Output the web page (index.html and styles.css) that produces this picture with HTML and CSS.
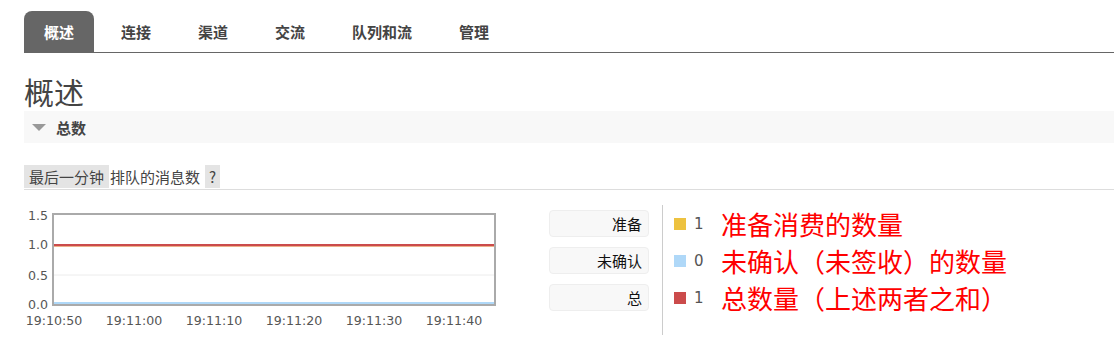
FILE: index.html
```html
<!DOCTYPE html>
<html lang="zh-CN">
<head>
    <meta charset="UTF-8">
    <title>概述</title>
    <link rel="stylesheet" href="styles.css">
</head>
<body>
    <ul class="tabs">
        <li class="tab active">概述</li>
        <li class="tab">连接</li>
        <li class="tab">渠道</li>
        <li class="tab">交流</li>
        <li class="tab">队列和流</li>
        <li class="tab">管理</li>
    </ul>

    <h1>概述</h1>

    <div class="section-head">
        <span class="arrow"></span>
        <span class="section-title">总数</span>
    </div>

    <div class="chart-title">
        <span class="pill">最后一分钟</span>
        <span class="chart-name">排队的消息数</span>
        <span class="pill help">?</span>
    </div>

    <div class="chart-row">
        <svg class="chart" width="500" height="130" viewBox="0 0 500 130">
            <line x1="30" y1="70" x2="470" y2="70" stroke="#ececec" stroke-width="1"/>
            <line x1="30" y1="41" x2="470" y2="41" stroke="#edb08a" stroke-width="2"/>
            <line x1="30" y1="40" x2="470" y2="40" stroke="#cb4b4b" stroke-width="2"/>
            <line x1="30" y1="98.5" x2="470" y2="98.5" stroke="#afd8f8" stroke-width="3"/>
            <rect x="29" y="9" width="442" height="91" fill="none" stroke="#aaa" stroke-width="2"/>
            <g class="y-axis" text-anchor="end">
                <text x="24" y="14.5">1.5</text>
                <text x="24" y="43.5">1.0</text>
                <text x="24" y="74.5">0.5</text>
                <text x="24" y="103.5">0.0</text>
            </g>
            <g class="x-axis" text-anchor="middle">
                <text x="30" y="119.5">19:10:50</text>
                <text x="110" y="119.5">19:11:00</text>
                <text x="190" y="119.5">19:11:10</text>
                <text x="270" y="119.5">19:11:20</text>
                <text x="350" y="119.5">19:11:30</text>
                <text x="430" y="119.5">19:11:40</text>
            </g>
        </svg>

        <div class="legend-labels">
            <div class="legend-row"><span class="label-box">准备</span></div>
            <div class="legend-row"><span class="label-box">未确认</span></div>
            <div class="legend-row"><span class="label-box">总</span></div>
        </div>

        <div class="legend-values">
            <div class="legend-row">
                <span class="swatch ready"></span>
                <span class="count">1</span>
                <span class="note">准备消费的数量</span>
            </div>
            <div class="legend-row">
                <span class="swatch unacked"></span>
                <span class="count">0</span>
                <span class="note">未确认（未签收）的数量</span>
            </div>
            <div class="legend-row">
                <span class="swatch total"></span>
                <span class="count">1</span>
                <span class="note">总数量（上述两者之和）</span>
            </div>
        </div>
    </div>
</body>
</html>
```

FILE: styles.css
```css
body {
    margin: 0;
    padding-left: 24px;
    font-family: "DejaVu Sans", "Noto Sans CJK SC", sans-serif;
    color: #444;
    background-color: #fff;
}

.tabs {
    display: flex;
    list-style: none;
    margin: 11px 0 0;
    padding: 0;
    border-bottom: 1px solid #666;
}

.tab {
    height: 41px;
    line-height: 41px;
    padding: 0 20px;
    margin-right: 7px;
    font-family: "Noto Sans CJK SC", sans-serif;
    font-size: 15px;
    font-weight: bold;
    color: #444;
    border-radius: 8px 8px 0 0;
}

.tab.active {
    background-color: #666;
    color: #fff;
}

h1 {
    margin: 18px 0 0;
    font-family: "Noto Sans CJK SC", sans-serif;
    font-size: 30px;
    font-weight: normal;
    line-height: 40px;
    color: #444;
}

.section-head {
    display: flex;
    align-items: center;
    height: 32px;
    background-color: #f8f8f8;
}

.arrow {
    width: 0;
    height: 0;
    margin: 1px 10px 0 8px;
    border-left: 7px solid transparent;
    border-right: 7px solid transparent;
    border-top: 7px solid #999;
}

.section-title {
    font-family: "Noto Sans CJK SC", sans-serif;
    font-size: 15px;
    font-weight: bold;
    color: #444;
}

.chart-title {
    display: flex;
    align-items: stretch;
    margin-top: 22px;
    height: 24px;
    border-bottom: 1px solid #ddd;
    font-family: "Noto Sans CJK SC", sans-serif;
    font-size: 15px;
    line-height: 23px;
    color: #444;
}

.pill {
    height: 23px;
    padding: 0 5px;
    background-color: #e4e4e4;
}

.chart-name {
    padding: 0 5px 0 1px;
}

.help {
    padding: 0 4px;
}

.chart-row {
    display: flex;
    margin-top: 15px;
}

.chart {
    display: block;
    flex: none;
}

.chart text {
    font-family: "DejaVu Sans", sans-serif;
    font-size: 12.6px;
    fill: #555;
}

.legend-labels {
    margin-left: 25px;
}

.legend-row {
    display: flex;
    align-items: center;
    height: 37px;
}

.label-box {
    width: 100px;
    height: 27px;
    box-sizing: border-box;
    padding-right: 6px;
    line-height: 25px;
    text-align: right;
    background-color: #f8f8f8;
    border: 1px solid #eee;
    border-radius: 4px;
    font-family: "Noto Sans CJK SC", sans-serif;
    font-size: 15px;
    color: #111;
}

.legend-values {
    margin-left: 13px;
    padding-left: 11px;
    border-left: 1px solid #ccc;
}

.swatch {
    width: 12px;
    height: 12px;
    margin-right: 8px;
}

.swatch.ready { background-color: #edc240; }
.swatch.unacked { background-color: #afd8f8; }
.swatch.total { background-color: #cb4b4b; }

.count {
    width: 27px;
    font-size: 15px;
    color: #555;
}

.note {
    font-family: "Noto Sans CJK SC", sans-serif;
    font-size: 26px;
    line-height: 36px;
    color: #f00;
}
```
